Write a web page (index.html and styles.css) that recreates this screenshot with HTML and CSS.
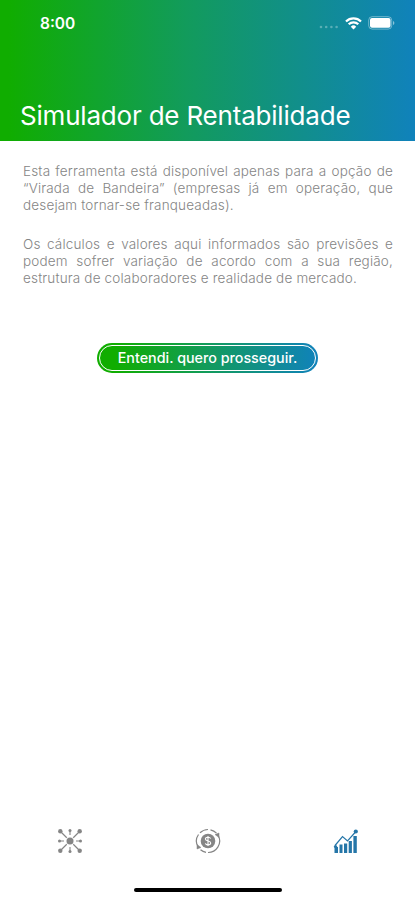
FILE: index.html
```html
<!DOCTYPE html>
<html lang="pt-BR">
<head>
  <meta charset="UTF-8">
  <meta name="viewport" content="width=device-width, initial-scale=1">
  <title>Simulador de Rentabilidade</title>
  <link rel="stylesheet" href="styles.css">
</head>
<body>

  <header class="header">
    <div class="status-bar">
      <span class="time">8:00</span>
      <div class="status-icons">
        <svg class="signal" width="20" height="4" viewBox="0 0 20 4">
          <circle cx="2" cy="2" r="1.3"/>
          <circle cx="7.2" cy="2" r="1.3"/>
          <circle cx="12.4" cy="2" r="1.3"/>
          <circle cx="17.6" cy="2" r="1.3"/>
        </svg>
        <svg class="wifi" width="17" height="13" viewBox="0 0 17 13">
          <path d="M1 4.5a10.6 10.6 0 0 1 15 0M3.7 7.3a6.8 6.8 0 0 1 9.6 0" fill="none" stroke="#fff" stroke-width="2.2"/>
          <path d="M5.8 9.7a3.8 3.8 0 0 1 5.4 0L8.5 12.5z" fill="#fff"/>
        </svg>
        <svg class="battery" width="27" height="14" viewBox="0 0 27 14">
          <rect x=".7" y=".7" width="23" height="12.4" rx="3.5" fill="none" stroke="#fff" stroke-opacity=".4"/>
          <rect x="2" y="2" width="20.5" height="9.8" rx="2" fill="#fff"/>
          <path d="M25 5v4q1.4-.6 1.4-2T25 5z" fill="#fff" fill-opacity=".5"/>
        </svg>
      </div>
    </div>
    <h1>Simulador de Rentabilidade</h1>
  </header>

  <main class="content">
    <p>Esta ferramenta está disponível apenas para a opção de “Virada de Bandeira” (empresas já em operação, que desejam tornar-se franqueadas).</p>
    <p>Os cálculos e valores aqui informados são previsões e podem sofrer variação de acordo com a sua região, estrutura de colaboradores e realidade de mercado.</p>
    <button class="btn"><span>Entendi. quero prosseguir.</span></button>
  </main>

  <nav class="tabs">
    <a class="tab">
      <svg width="26" height="26" viewBox="0 0 26 26" fill="currentColor" stroke="currentColor">
        <path d="M4 4l18 18M22 4L4 22" stroke-width="1.2"/>
        <path d="M13 2v5M13 19v5M2 13h5M19 13h5" stroke-width="1.1"/>
        <circle cx="13" cy="13" r="4.6" fill="#fff" stroke="none"/>
        <circle cx="13" cy="13" r="3.5" stroke="none"/>
        <g stroke="none">
          <circle cx="3.3" cy="3.3" r="2.2"/>
          <circle cx="22.7" cy="3.3" r="2.2"/>
          <circle cx="3.3" cy="22.7" r="2.2"/>
          <circle cx="22.7" cy="22.7" r="2.2"/>
          <circle cx="13" cy="2.5" r="1.5"/>
          <circle cx="13" cy="23.5" r="1.5"/>
          <circle cx="2.5" cy="13" r="1.5"/>
          <circle cx="23.5" cy="13" r="1.5"/>
        </g>
      </svg>
    </a>
    <a class="tab">
      <svg width="26" height="26" viewBox="0 0 26 26" fill="none" stroke="currentColor">
        <circle cx="13" cy="13" r="7.3" fill="currentColor" stroke="none"/>
        <path d="M15.7 10.5c-.5-1-1.5-1.3-2.7-1.3-1.6 0-2.6.7-2.6 1.9 0 2.7 5.3 1.2 5.3 3.9 0 1.2-1.1 1.9-2.7 1.9-1.3 0-2.3-.5-2.7-1.5M13 8v10" stroke="#fff" stroke-width="1.1"/>
        <path d="M13 1.5A11.5 11.5 0 0 0 5 4.8M3.5 6.5A11.5 11.5 0 0 0 3.5 19.5M5.5 21.7A11.5 11.5 0 0 0 11 24.3M13 24.5A11.5 11.5 0 0 0 23.5 8M15.5 1.8A11.5 11.5 0 0 1 21.5 5.2" stroke-width="1.2"/>
        <path d="M20 6.500l4-1.500v4.500zM6 19.500l-4 1.500v-4.500z" fill="currentColor" stroke-width=".5"/>
      </svg>
    </a>
    <a class="tab active">
      <svg width="26" height="26" viewBox="0 0 26 26" fill="currentColor">
        <path d="M1.5 19h3.500v6h-3.500zM6.500 16.500h3v8.500h-3zM11 15.500h3.200v9.500H11zM15.700 13h3.200v12h-3.200zM20.400 8h3.400v17h-3.400z"/>
        <path d="M2 17.500L9.500 8.500l5 4.500L22.500 4" fill="none" stroke="currentColor" stroke-width="1.200"/>
        <circle cx="2.500" cy="18.500" r="1.600"/>
        <circle cx="22.800" cy="3.500" r="2.100"/>
      </svg>
    </a>
  </nav>

  <div class="home-indicator"></div>

</body>
</html>
```

FILE: styles.css
```css
* {
  box-sizing: border-box;
}

body {
  margin: 0;
  height: 100vh;
  display: flex;
  flex-direction: column;
  background: #fff;
  font-family: Inter, "Liberation Sans", sans-serif;
}

.header {
  height: 141px;
  display: flex;
  flex-direction: column;
  justify-content: space-between;
  padding: 13px 20px 9px;
  background: linear-gradient(90deg, #10ad00 2%, #129b5c 45%, #1082bb);
  color: #fff;
}

.status-bar {
  display: flex;
  align-items: center;
  justify-content: space-between;
  height: 20px;
  padding-left: 20px;
}

.time {
  font-size: 15.5px;
  font-weight: 600;
}

.status-icons {
  display: flex;
  align-items: center;
  gap: 6px;
}

.signal {
  margin-top: 7px;
  fill: #fff;
  opacity: 0.3;
}

h1 {
  margin: 0;
  font-size: 26px;
  font-weight: 400;
  line-height: 32px;
  letter-spacing: -0.2px;
  white-space: nowrap;
}

.content {
  flex: 1;
  padding: 22px 22px 0;
}

.content p {
  margin: 0 0 22px 1px;
  font-size: 13.5px;
  font-weight: 300;
  line-height: 17px;
  letter-spacing: 0.17px;
  color: #858585;
  text-align: justify;
}

.btn {
  display: block;
  width: 221px;
  height: 30px;
  margin: 56px auto 0;
  padding: 2px;
  border: none;
  border-radius: 15px;
  background: linear-gradient(90deg, #10ad00 8%, #129b5c 50%, #1082bb);
  color: #fff;
  font-family: inherit;
  font-size: 14.3px;
  font-weight: 500;
}

.btn span {
  display: block;
  border: 1px solid #fff;
  border-radius: 14px;
  line-height: 24px;
}

.tabs {
  display: flex;
  height: 60px;
}

.tab {
  flex: 1;
  display: flex;
  justify-content: center;
  padding: 15px 0 0 1px;
  color: #858585;
}

.tab.active {
  color: #2576a8;
}

.home-indicator {
  width: 148px;
  height: 4px;
  margin: 15px auto 8px;
  border-radius: 2px;
  background: #000;
}
```
